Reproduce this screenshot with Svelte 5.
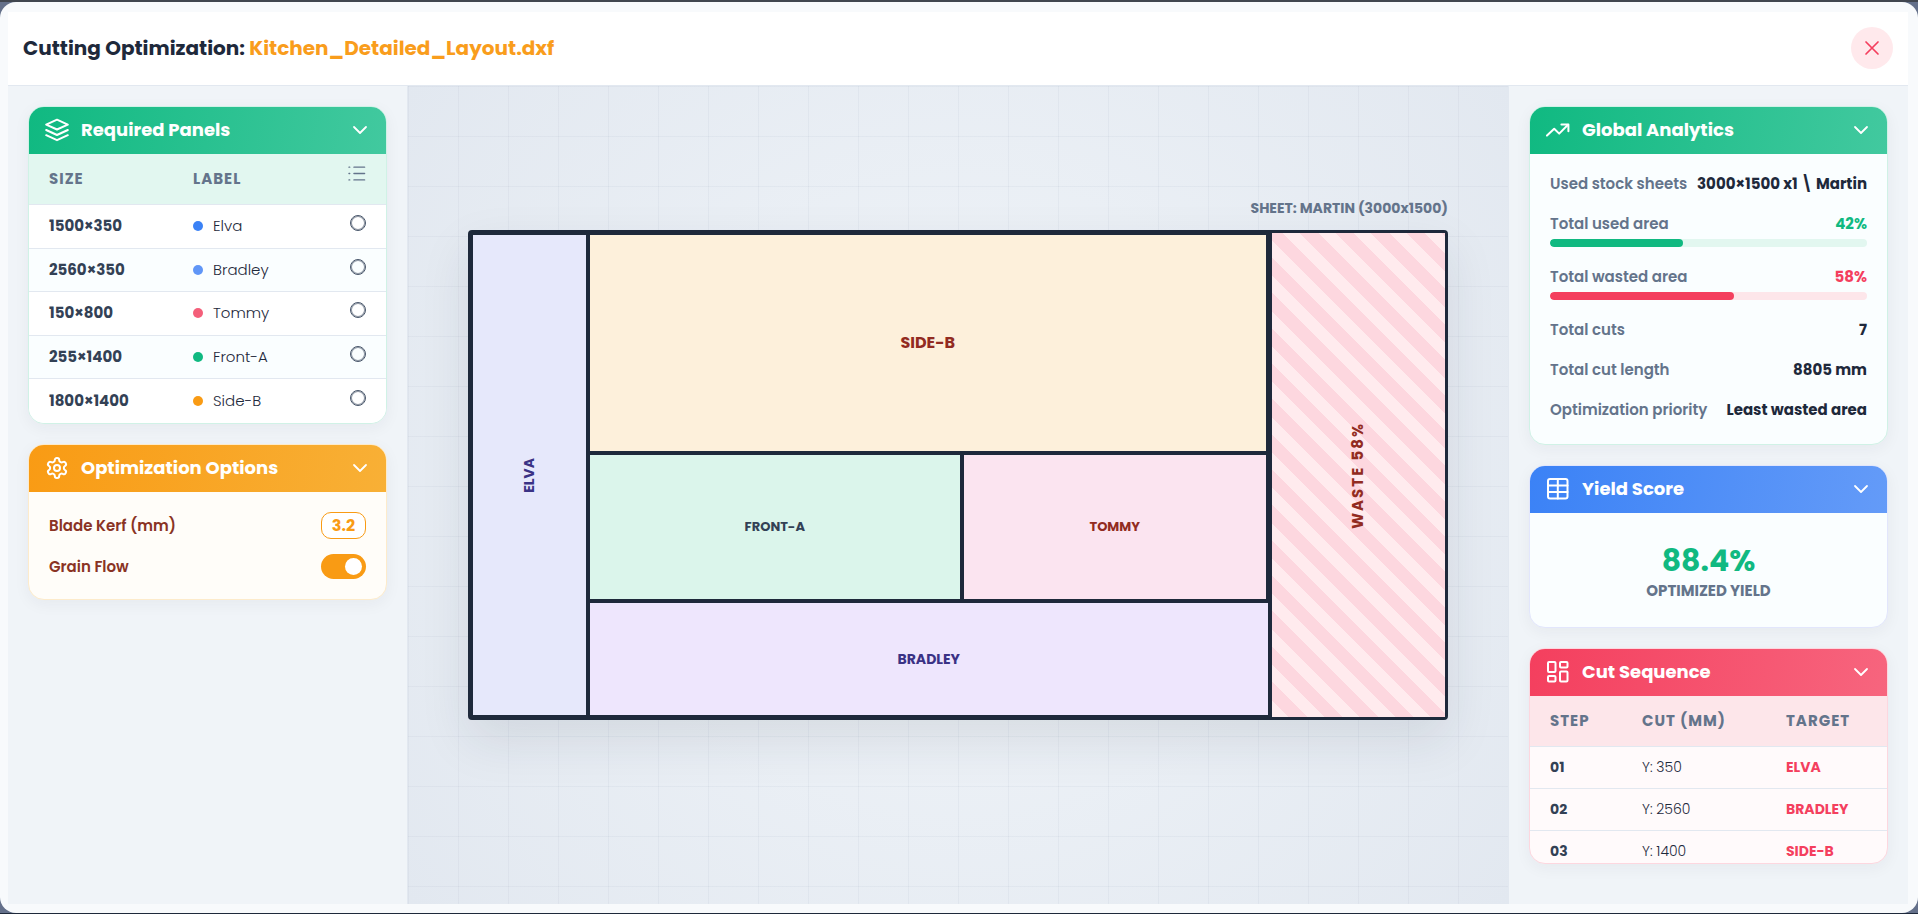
<script>
    let fileName = "Kitchen_Detailed_Layout.dxf";
    let grainFlow = $state(true);
    let kerf = $state("3.2");

    let panels = $state([
        { size: "1500×350", label: "Elva", color: "blue", picked: false },
        { size: "2560×350", label: "Bradley", color: "sky", picked: false },
        { size: "150×800", label: "Tommy", color: "rose", picked: false },
        { size: "255×1400", label: "Front-A", color: "green", picked: false },
        { size: "1800×1400", label: "Side-B", color: "amber", picked: false },
    ]);

    let open = $state({ panels: true, options: true, analytics: true, score: true, cuts: true });

    const analytics = [
        { name: "Used stock sheets", value: "3000×1500 x1 \\ Martin" },
        { name: "Total used area", value: "42%", percent: 42, tone: "used" },
        { name: "Total wasted area", value: "58%", percent: 58, tone: "wasted" },
        { name: "Total cuts", value: "7" },
        { name: "Total cut length", value: "8805 mm" },
        { name: "Optimization priority", value: "Least wasted area" },
    ];

    const cuts = [
        { step: "01", cut: "Y: 350", target: "ELVA" },
        { step: "02", cut: "Y: 2560", target: "BRADLEY" },
        { step: "03", cut: "Y: 1400", target: "SIDE-B" },
    ];
</script>

{#snippet cardHeader(key, title, icon)}
    <button class="card-header" aria-expanded={open[key]} onclick={() => (open[key] = !open[key])}>
        <svg class="icon" viewBox="0 0 24 24" aria-hidden="true">{@render icon()}</svg>
        <span class="card-title">{title}</span>
        <svg class="chevron" class:closed={!open[key]} viewBox="0 0 24 24" aria-hidden="true">
            <path d="M6 9l6 6 6-6" />
        </svg>
    </button>
{/snippet}

{#snippet layersIcon()}
    <path d="M12 1.7 1.2 6.6 12 11.5l10.8-4.9L12 1.7z" />
    <path d="m1.2 12 10.8 5 10.8-5" />
    <path d="m1.2 17.2 10.8 5 10.8-5" />
{/snippet}

{#snippet gearIcon()}
    <path d="M12.22 2h-.44a2 2 0 0 0-2 2v.18a2 2 0 0 1-1 1.73l-.43.25a2 2 0 0 1-2 0l-.15-.08a2 2 0 0 0-2.73.73l-.22.38a2 2 0 0 0 .73 2.73l.15.1a2 2 0 0 1 1 1.72v.51a2 2 0 0 1-1 1.74l-.15.09a2 2 0 0 0-.73 2.73l.22.38a2 2 0 0 0 2.73.73l.15-.08a2 2 0 0 1 2 0l.43.25a2 2 0 0 1 1 1.73V20a2 2 0 0 0 2 2h.44a2 2 0 0 0 2-2v-.18a2 2 0 0 1 1-1.73l.43-.25a2 2 0 0 1 2 0l.15.08a2 2 0 0 0 2.73-.73l.22-.39a2 2 0 0 0-.73-2.73l-.15-.08a2 2 0 0 1-1-1.74v-.5a2 2 0 0 1 1-1.74l.15-.09a2 2 0 0 0 .73-2.73l-.22-.38a2 2 0 0 0-2.73-.73l-.15.08a2 2 0 0 1-2 0l-.43-.25a2 2 0 0 1-1-1.73V4a2 2 0 0 0-2-2z" />
    <circle cx="12" cy="12" r="3" />
{/snippet}

{#snippet trendIcon()}
    <path d="M1 17.6 8.2 10.8l5 4.8L22 6.8" />
    <path d="M15.4 6.4h7v6.8" />
{/snippet}

{#snippet tableIcon()}
    <rect x="2" y="2" width="19.5" height="19.5" rx="2" />
    <path d="M11.8 2v19.5M2 8.5h19.5M2 15h19.5" />
{/snippet}

{#snippet boardIcon()}
    <rect x="2" y="2" width="7.5" height="10" rx="1" />
    <rect x="14" y="2" width="7.5" height="5.5" rx="1" />
    <rect x="14" y="11.5" width="7.5" height="10" rx="1" />
    <rect x="2" y="16" width="7.5" height="5.5" rx="1" />
{/snippet}

<div class="modal">
    <header class="top">
        <h1>Cutting Optimization: <span>{fileName}</span></h1>
        <button class="close" aria-label="Close">
            <svg viewBox="0 0 24 24" aria-hidden="true"><path d="M6 6l12 12M18 6L6 18" /></svg>
        </button>
    </header>

    <div class="workspace">
        <aside class="side left">
            <section class="card green">
                {@render cardHeader("panels", "Required Panels", layersIcon)}
                {#if open.panels}
                    <table class="panels">
                        <thead>
                            <tr>
                                <th class="size">SIZE</th>
                                <th>LABEL</th>
                                <th class="pick">
                                    <svg viewBox="0 0 24 24" role="img" aria-label="Selected">
                                        <path d="M7 3h15M7 12h15M7 21h15M0 3h1M0 12h1M0 21h1" />
                                    </svg>
                                </th>
                            </tr>
                        </thead>
                        <tbody>
                            {#each panels as panel}
                                <tr>
                                    <td class="strong">{panel.size}</td>
                                    <td><span class="label"><i class="dot {panel.color}"></i>{panel.label}</span></td>
                                    <td class="pick">
                                        <input type="checkbox" aria-label={panel.label} bind:checked={panel.picked} />
                                    </td>
                                </tr>
                            {/each}
                        </tbody>
                    </table>
                {/if}
            </section>

            <section class="card amber">
                {@render cardHeader("options", "Optimization Options", gearIcon)}
                {#if open.options}
                    <div class="options">
                        <div class="option">
                            <label for="kerf">Blade Kerf (mm)</label>
                            <input id="kerf" class="kerf" type="text" inputmode="decimal" bind:value={kerf} />
                        </div>
                        <div class="option">
                            <label for="grain">Grain Flow</label>
                            <input id="grain" class="switch" type="checkbox" bind:checked={grainFlow} />
                        </div>
                    </div>
                {/if}
            </section>
        </aside>

        <main class="canvas">
            <p class="sheet-name">SHEET: MARTIN (3000x1500)</p>
            <div class="sheet">
                <div class="piece elva"><span class="upright">ELVA</span></div>
                <div class="middle">
                    <div class="piece side-b">SIDE-B</div>
                    <div class="pair">
                        <div class="piece front-a">FRONT-A</div>
                        <div class="piece tommy">TOMMY</div>
                    </div>
                    <div class="piece bradley">BRADLEY</div>
                </div>
                <div class="waste"><span class="upright">WASTE 58%</span></div>
            </div>
        </main>

        <aside class="side right">
            <section class="card green">
                {@render cardHeader("analytics", "Global Analytics", trendIcon)}
                {#if open.analytics}
                    <div class="analytics">
                        {#each analytics as row}
                            <div class="metric {row.tone}">
                                <div class="metric-line">
                                    <span>{row.name}</span>
                                    <strong>{row.value}</strong>
                                </div>
                                {#if row.percent}
                                    <div class="track"><div class="fill" style="width: {row.percent}%"></div></div>
                                {/if}
                            </div>
                        {/each}
                    </div>
                {/if}
            </section>

            <section class="card blue">
                {@render cardHeader("score", "Yield Score", tableIcon)}
                {#if open.score}
                    <div class="score">
                        <strong>88.4%</strong>
                        <span>OPTIMIZED YIELD</span>
                    </div>
                {/if}
            </section>

            <section class="card red">
                {@render cardHeader("cuts", "Cut Sequence", boardIcon)}
                {#if open.cuts}
                    <div class="cuts-scroll">
                        <table class="cuts">
                            <thead>
                                <tr>
                                    <th class="step">STEP</th>
                                    <th class="cut">CUT (MM)</th>
                                    <th>TARGET</th>
                                </tr>
                            </thead>
                            <tbody>
                                {#each cuts as row}
                                    <tr>
                                        <td class="strong">{row.step}</td>
                                        <td>{row.cut}</td>
                                        <td class="target">{row.target}</td>
                                    </tr>
                                {/each}
                            </tbody>
                        </table>
                    </div>
                {/if}
            </section>
        </aside>
    </div>
</div>

<style>
:global(body) {
    background: #64708a;
    border-top: 2px solid #41464f;
    border-bottom: 1px solid #1e293b;
    box-sizing: border-box;
    min-height: 100vh;
    font-family: Poppins, Inter, "Open Sans", sans-serif;
    color: #1e293b;
}

* {
    box-sizing: border-box;
}

.modal {
    display: flex;
    flex-direction: column;
    min-height: calc(100vh - 3px);
    padding: 10px 10px 9px 8px;
    background: #f8fafc;
    border-radius: 16px;
}

button {
    border: 0;
    font-family: inherit;
    cursor: pointer;
}

svg {
    fill: none;
    stroke: currentColor;
    stroke-width: 2;
    stroke-linecap: round;
    stroke-linejoin: round;
}

.top {
    display: flex;
    align-items: center;
    justify-content: space-between;
    height: 74px;
    padding: 0 15px 1px;
    background: #fff;
    border-bottom: 1px solid #e2e8f0;
}

h1 {
    margin: 0;
    font-size: 20px;
    line-height: 30px;
    font-weight: 700;
}

h1 span {
    color: #f99d1c;
}

.close {
    display: grid;
    place-items: center;
    width: 42px;
    height: 42px;
    padding: 0;
    border-radius: 50%;
    background: #ffe9ec;
    color: #f43f5e;
}

.close svg {
    width: 24px;
    height: 24px;
    stroke-width: 1.7;
}

.workspace {
    flex: 1;
    display: flex;
    background: #f0f4f8;
}

.side {
    flex: 0 0 400px;
    display: flex;
    flex-direction: column;
    gap: 20px;
    padding: 20px;
}

.left {
    border-right: 1px solid #e2e8f0;
}

.right {
    border-left: 1px solid #e2e8f0;
}

.card {
    overflow: hidden;
    border: 1px solid #d0f2e6;
    border-radius: 16px;
    background: #fafeff;
    box-shadow: 0 4px 16px rgba(30, 41, 59, 0.05);
}

.card.amber {
    border-color: #fdebcb;
    background: #fffdf9;
}

.card.blue {
    border-color: #e2e6fc;
}

.card.red {
    border-color: #fdd7df;
    background: #fffafb;
}

.card-header {
    display: flex;
    align-items: center;
    gap: 12px;
    width: 100%;
    height: 47px;
    padding: 0 14px 1px 16px;
    color: #fff;
    text-align: left;
}

.green .card-header {
    background: linear-gradient(100deg, #10b981, #42c99f);
}

.amber .card-header {
    background: linear-gradient(100deg, #f99b14, #f8b036);
}

.blue .card-header {
    background: linear-gradient(100deg, #3b82f6, #649bf8);
}

.red .card-header {
    background: linear-gradient(100deg, #f43f5e, #f7657e);
}

.card-title {
    flex: 1;
    font-size: 18px;
    line-height: 24px;
    font-weight: 700;
}

.icon,
.chevron {
    flex: none;
    width: 24px;
    height: 24px;
}

.chevron {
    stroke-width: 1.8;
}

.closed {
    transform: rotate(-90deg);
}

table {
    width: 100%;
    border-collapse: separate;
    border-spacing: 0;
    table-layout: fixed;
}

th,
td {
    padding: 0 0 0 20px;
    border-bottom: 1px solid #e2e8f0;
    text-align: left;
}

th {
    height: 51px;
    color: #64748b;
    font-size: 15px;
    line-height: 20px;
    font-weight: 700;
    letter-spacing: 1px;
}

td {
    padding-bottom: 1px;
    color: #1e293b;
    font-size: 15px;
    line-height: 20px;
    font-weight: 300;
}

.strong {
    color: #334155;
    font-weight: 700;
}

.panels th {
    background: #e2f7f0;
}

.panels td {
    height: 44px;
    background: #fff;
}

.panels tr:nth-child(even) td {
    height: 43px;
    background: #fafeff;
}

.panels tr:last-child td {
    border-bottom: 0;
}

.panels .size {
    width: 144px;
}

.panels .pick {
    width: 80px;
    padding: 0 20px 8px 0;
    text-align: right;
}

.panels th.pick {
    padding-bottom: 12px;
}

.pick svg {
    width: 17px;
    height: 17px;
    overflow: visible;
    vertical-align: middle;
}

.pick input {
    appearance: none;
    width: 16px;
    height: 16px;
    margin: 0;
    border: 1px solid #475569;
    border-radius: 50%;
    box-shadow: inset 0 0 0 1px rgba(71, 85, 105, 0.6);
    vertical-align: middle;
}

.pick input:checked {
    background: #475569;
}

.label {
    display: flex;
    align-items: center;
    gap: 10px;
}

.dot {
    width: 10px;
    height: 10px;
    border-radius: 50%;
}

.dot.blue {
    background: #3b82f6;
}

.dot.sky {
    background: #6096f7;
}

.dot.rose {
    background: #f45f7a;
}

.dot.green {
    background: #10b981;
}

.dot.amber {
    background: #f99b14;
}

.options {
    display: flex;
    flex-direction: column;
    gap: 15px;
    padding: 20px;
}

.option {
    display: flex;
    align-items: center;
    justify-content: space-between;
    color: #8a3324;
    font-size: 15px;
    line-height: 20px;
    font-weight: 600;
}

.kerf {
    width: 45px;
    height: 27px;
    padding: 0;
    border: 1px solid #f99b14;
    border-radius: 10px;
    background: #fff;
    color: #f99b14;
    font: inherit;
    font-size: 16px;
    font-weight: 700;
    text-align: center;
}

.switch {
    appearance: none;
    display: flex;
    width: 45px;
    height: 25px;
    margin: 0;
    padding: 4px;
    border-radius: 13px;
    background: #cbd5e1;
    cursor: pointer;
}

.switch::before {
    content: "";
    width: 17px;
    height: 17px;
    border-radius: 50%;
    background: #fff;
}

.switch:checked {
    justify-content: flex-end;
    background: #f99b14;
}

.canvas {
    flex: 1;
    display: flex;
    flex-direction: column;
    justify-content: center;
    gap: 11px;
    padding: 0 60px 73px;
    background:
        linear-gradient(rgba(100, 116, 139, 0.06) 1px, transparent 1px) 0 0 / 50px 50px,
        linear-gradient(90deg, rgba(100, 116, 139, 0.06) 1px, transparent 1px) 0 0 / 50px 50px,
        radial-gradient(circle at center, #f1f5f9, #e2e8f0);
}

.sheet-name {
    margin: 0;
    color: #64748b;
    font-size: 14px;
    line-height: 22px;
    font-weight: 700;
    text-align: right;
}

.sheet {
    display: grid;
    grid-template-columns: 12fr 70fr 18fr;
    aspect-ratio: 2;
    border: 3px solid #1e293b;
    border-radius: 4px;
    background: #1e293b;
    box-shadow: 0 20px 50px rgba(30, 41, 59, 0.1);
}

.middle {
    display: grid;
    grid-template-rows: 220fr 148fr 116fr;
}

.pair {
    display: grid;
    grid-template-columns: 55fr 45fr;
    margin-right: 2px;
}

.piece {
    display: grid;
    place-items: center;
    border: 2px solid #1e293b;
    font-size: 14px;
    line-height: 20px;
    font-weight: 700;
}

.upright {
    writing-mode: vertical-rl;
    transform: rotate(180deg);
}

.elva {
    background: #e6e8fb;
    color: #3a3285;
}

.side-b {
    margin-right: 2px;
    background: #fdf0db;
    color: #922b21;
    font-size: 16px;
}

.front-a {
    background: #dbf5eb;
    color: #334155;
    font-size: 13px;
}

.tommy {
    background: #fbe4f0;
    color: #922b21;
    font-size: 13px;
}

.bradley {
    background: #eee6fd;
    color: #3a3285;
}

.waste {
    display: grid;
    place-items: center;
    border-left: 2px solid #1e293b;
    background: repeating-linear-gradient(45deg, #ffebee 0 12px, #fdd7df 12px 25px);
    color: #922b21;
    font-size: 15px;
    line-height: 20px;
    font-weight: 700;
    letter-spacing: 2px;
}

.analytics {
    display: flex;
    flex-direction: column;
    gap: 18px;
    padding: 19px 20px 23px;
}

.metric-line {
    display: flex;
    justify-content: space-between;
    font-size: 15px;
    line-height: 22px;
    white-space: nowrap;
}

.metric-line span {
    color: #64748b;
    font-weight: 600;
}

.metric-line strong {
    font-weight: 700;
}

.used strong {
    color: #10b981;
}

.wasted strong {
    color: #f43f5e;
}

.track {
    height: 8px;
    margin: 4px 0 1px;
    overflow: hidden;
    border-radius: 4px;
    background: #e2f7f0;
}

.wasted .track {
    background: #fde6ea;
}

.fill {
    height: 100%;
    border-radius: 4px;
    background: #10b981;
}

.wasted .fill {
    background: #f43f5e;
}

.score {
    display: flex;
    flex-direction: column;
    align-items: center;
    padding: 27px 20px 26px;
}

.score strong {
    color: #10b981;
    font-size: 30px;
    line-height: 41px;
    font-weight: 700;
}

.score span {
    color: #64748b;
    font-size: 15px;
    line-height: 20px;
    font-weight: 700;
}

.cuts-scroll {
    max-height: 167px;
    overflow: hidden;
}

.cuts th {
    background: #fde6ea;
}

.cuts td {
    height: 42px;
    font-size: 14px;
}

.cuts .step {
    width: 92px;
}

.cuts .cut {
    width: 144px;
}

.cuts .target {
    color: #f43f5e;
    font-weight: 700;
}
</style>
